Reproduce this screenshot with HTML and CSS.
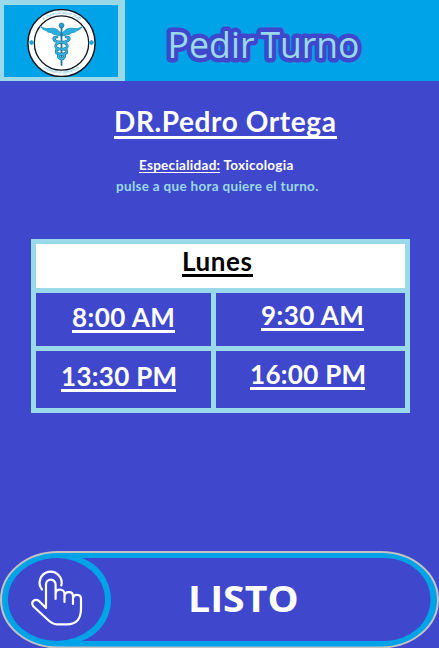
FILE: index.html
```
<!DOCTYPE html>
<html lang="es">
<head>
<meta charset="utf-8">
<title>Pedir Turno</title>
<link rel="stylesheet" href="styles.css">
</head>
<body>
<header class="header">
  <div class="brand">
    <svg class="logo" viewBox="4 5 114 72">
      <circle cx="61.5" cy="43" r="33.6" fill="#fff" stroke="#111820" stroke-width="1.5"/>
      <circle cx="61.5" cy="43" r="27.2" fill="#fff" stroke="#111820" stroke-width="1.300"/>
      <path id="ringTop" d="M35 31 A29.2 29.2 0 0 1 88 31" fill="none"/>
      <path id="ringBottom" d="M34 58 A32 32 0 0 0 89 58" fill="none"/>
      <text class="ring"><textPath href="#ringTop" startOffset="50%">A chemical plant Stuff</textPath></text>
      <text class="ring"><textPath href="#ringBottom" startOffset="50%">creando la diferencia</textPath></text>
      <path d="M31.5 40l2.5 2.5-2.5 2.5-2.5-2.5zM91.500 40l2.500 2.500-2.500 2.500-2.500-2.500z" fill="#18a5d6" stroke="#18a5d6" stroke-width=".7"/>
      <path d="M60.500 33C58 29 54 27.500 49 28.500C46 29 43 28 40.500 26.500C42 29 44 30 46 30.500C47 32 49 32.500 51 32.500C53 35 57 34.500 60.500 36zM62.500 33C65 29 69 27.500 74 28.500C77 29 80 28 82.500 26.500C81 29 79 30 77 30.500C76 32 74 32.500 72 32.500C70 35 66 34.500 62.500 36z" fill="#28aee0" stroke="#2b9cc6" stroke-width="1"/>
      <g fill="none" stroke-linecap="round">
        <path d="M61.500 27V65" stroke="#23779a" stroke-width="1.800"/>
        <path d="M57 37C51 37 54 42 60 42C70 43 69 49 61 49C54 49 55 54 61 54C67 55 65 59 60 58M66 37C72 37 69 42 63 42C53 43 54 49 62 49C69 49 68 54 62 54C56 55 58 59 63 59" stroke="#176b8e" stroke-width="2.700"/>
        <path d="M57 37C51 37 54 42 60 42C70 43 69 49 61 49C54 49 55 54 61 54C67 55 65 59 60 58M66 37C72 37 69 42 63 42C53 43 54 49 62 49C69 49 68 54 62 54C56 55 58 59 63 59" stroke="#35b5e1" stroke-width="1.600"/>
      </g>
      <circle cx="61.500" cy="25.500" r="2.500" fill="#239fd0" stroke="#21647f" stroke-width=".6"/>
    </svg>
  </div>
  <svg class="heading" role="heading" aria-level="1" viewBox="0 0 314 81">
    <text class="heading-text" x="42.500" y="57.700" textLength="87" lengthAdjust="spacingAndGlyphs">Pedir</text>
    <text class="heading-text" x="135.500" y="57.700" textLength="99" lengthAdjust="spacingAndGlyphs">Turno</text>
  </svg>
</header>
<main>
  <h2 class="doctor">DR.Pedro Ortega</h2>
  <p class="specialty"><span class="label">Especialidad:</span> Toxicologia</p>
  <p class="hint">pulse a que hora quiere el turno.</p>
  <section class="schedule">
    <div class="day"><span class="slot lunes">Lunes</span></div>
    <div class="cell a"><span class="slot short">8:00 AM</span></div>
    <div class="cell b"><span class="slot short">9:30 AM</span></div>
    <div class="cell c"><span class="slot long">13:30 PM</span></div>
    <div class="cell d"><span class="slot long">16:00 PM</span></div>
  </section>
</main>
<button class="done">
  <svg class="done-shape" viewBox="0 551 439 97">
    <rect x="1" y="552" width="437" height="95.500" rx="57" ry="47.700" fill="#00a2e8" stroke="#c3c3c3" stroke-width="2"/>
    <path d="M82 558H385A45.500 41.500 0 0 1 385 641H82C100 634 111 618 111 600C111 581 100 565 82 558Z" fill="#3f48cc"/>
    <ellipse cx="56.500" cy="599.500" rx="48.500" ry="41.500" fill="#3f48cc"/>
    <g fill="none" stroke="#fff" stroke-width="2.200" stroke-linecap="round" stroke-linejoin="round">
      <path d="M42 589.500A11 11 0 1 1 61.300 585.500"/>
      <path d="M46 608V584.500A4.800 4.800 0 0 1 55.600 584.500V599M55.600 594C56 588 64.500 588.500 64.500 594V602M64.500 596C65 590.500 73 591 73 596V604M73 598C74 593.500 81 594 81 599V608C81 619 77 624.300 67 624.300H57C53 624.300 50 622 47 619L33.500 606.500C30 602 35 598 39 601L46 608"/>
    </g>
  </svg>
  <span class="done-label">LISTO</span>
</button>
</body>
</html>
```
FILE: styles.css
```
* { box-sizing: border-box; }
body {
  margin: 0;
  width: 439px;
  height: 648px;
  overflow: hidden;
  display: flex;
  flex-direction: column;
  background: #3f48cc;
  color: #fff;
  font-family: Lato, "Liberation Sans", sans-serif;
  font-weight: 700;
}
h2, p { margin: 0; white-space: nowrap; }
.header { display: flex; height: 81px; background: #00a2e8; }
.brand { width: 125px; height: 81px; padding: 5px 7px 4px 4px; background: #99d9ea; }
.logo { display: block; width: 114px; height: 72px; background: #00a2e8; }
.ring { font: italic 4px "Open Sans", sans-serif; fill: #45b2d7; text-anchor: middle; }
.heading { display: block; width: 314px; height: 81px; }
.heading-text {
  font: 400 37px "Open Sans", sans-serif;
  fill: #99d9ea;
  stroke: #3f48cc;
  stroke-width: 9px;
  stroke-linejoin: round;
  paint-order: stroke;
}
main { display: flex; flex-direction: column; align-items: flex-start; height: 470px; padding-top: 25px; }
.doctor {
  width: 223px;
  margin-left: 114px;
  border-bottom: 3px solid #fff;
  font-size: 28px;
  line-height: 30px;
  letter-spacing: 0.6px;
}
.specialty { margin: 19px 0 0 139px; font-size: 13.5px; line-height: 14px; letter-spacing: 0.28px; }
.label { display: inline-block; border-bottom: 1px solid #fff; }
.hint { margin: 5px 0 0 116px; color: #99d9ea; font-size: 13.5px; line-height: 16px; letter-spacing: 0.3px; }
.schedule {
  display: grid;
  grid-template-columns: 175px 189px;
  grid-template-rows: 44px 53px 57px;
  gap: 5px;
  width: 379px;
  height: 174px;
  margin: 45px 0 0 31px;
  padding: 5px;
  background: #99d9ea;
}
.day { grid-column: 1 / 3; padding: 5px 0 0 146px; background: #fff; color: #000; }
.cell { background: #3f48cc; }
.a { padding: 12px 0 0 36px; }
.b { padding: 10px 0 0 45px; }
.c { padding: 13px 0 0 25px; }
.d { padding: 11px 0 0 34px; }
.slot { display: block; border-bottom: 3px solid; font-size: 26px; line-height: 25px; letter-spacing: 0.3px; white-space: nowrap; }
.lunes { width: 71px; letter-spacing: 0.6px; }
.short { width: 103px; letter-spacing: 0.45px; }
.long { width: 115px; }
.done { position: relative; width: 439px; height: 97px; padding: 0; border: 0; background: none; color: #fff; }
.done-shape { display: block; width: 439px; height: 97px; }
.done-label {
  position: absolute;
  left: 188px;
  top: 28px;
  font: 700 35px/40px "Open Sans", sans-serif;
  transform: scaleX(1.12);
  transform-origin: left;
}
```
